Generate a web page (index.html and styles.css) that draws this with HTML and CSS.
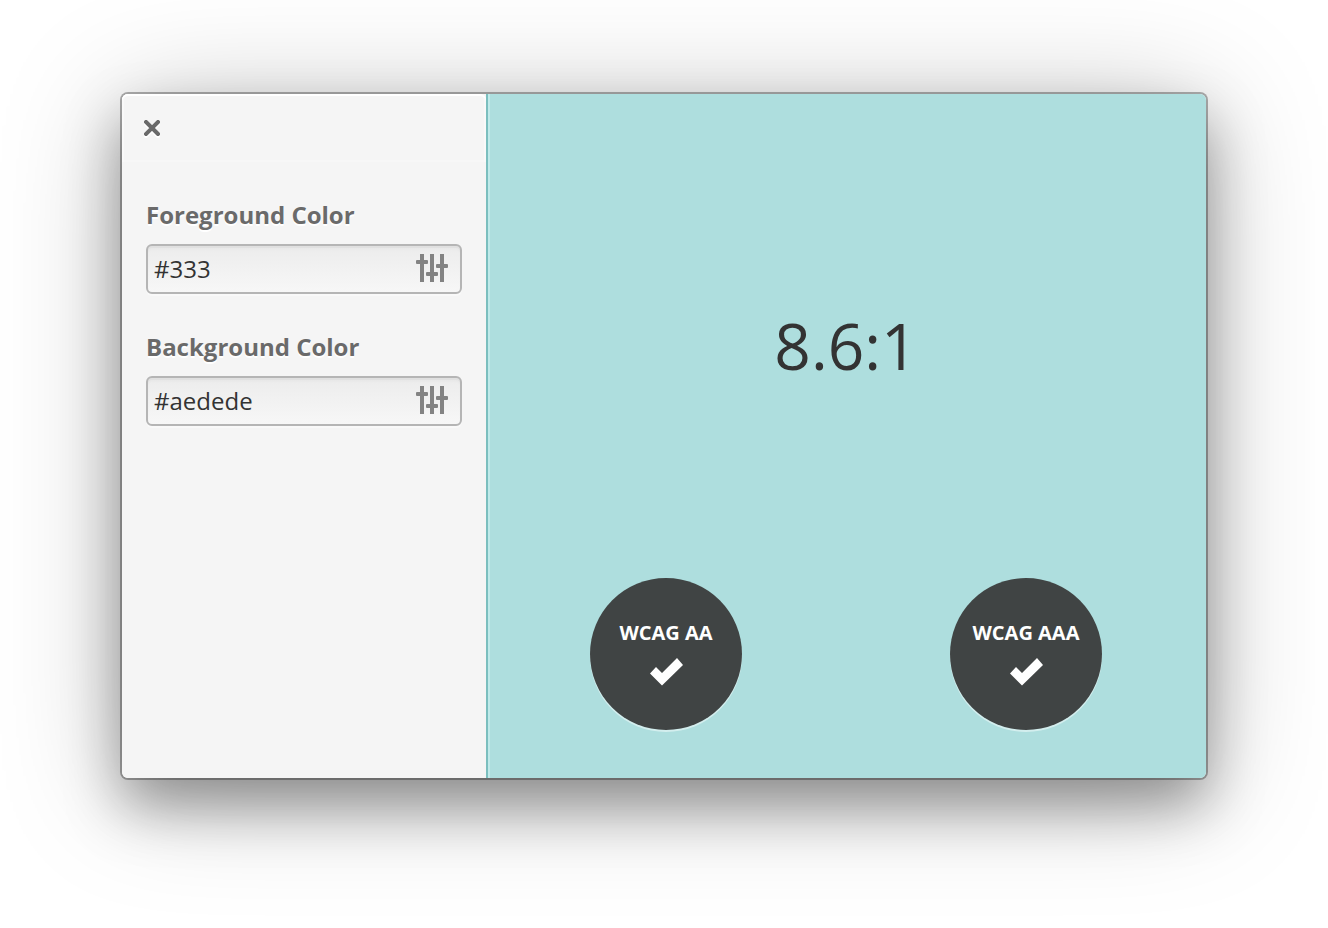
FILE: index.html
```html
<!DOCTYPE html>
<html lang="en">
<head>
<meta charset="utf-8">
<meta name="viewport" content="width=device-width, initial-scale=1">
<title>Contrast Checker</title>
<link rel="stylesheet" href="styles.css">
</head>
<body class="desktop">
<svg class="symbols" aria-hidden="true">
  <symbol id="sliders" viewBox="0 0 32 28">
    <path d="M4 0h4v28H4zM14 0h4v28h-4zM24 0h4v28h-4z"/>
    <rect x="0" y="6" width="12" height="4" rx="1"/>
    <rect x="10" y="18" width="12" height="4" rx="1"/>
    <rect x="20" y="10" width="12" height="4" rx="1"/>
  </symbol>
  <symbol id="check" viewBox="0 0 34 28">
    <path d="M1 15.500 7 9l6 6L28 0l6 7L13 27.500z"/>
  </symbol>
</svg>
<main class="window">
  <section class="sidebar">
    <header class="titlebar">
      <button class="close" type="button" aria-label="Close">
        <svg class="close-icon" viewBox="0 0 16 16"><path d="M2 2l12 12M14 2L2 14"/></svg>
      </button>
    </header>
    <form class="fields">
      <div class="field">
        <label class="label" for="foreground">Foreground Color</label>
        <div class="entry">
          <input class="input" id="foreground" type="text" value="#333" spellcheck="false">
          <button class="picker" type="button" aria-label="Choose foreground color"><svg class="picker-icon"><use href="#sliders"/></svg></button>
        </div>
      </div>
      <div class="field">
        <label class="label" for="background">Background Color</label>
        <div class="entry">
          <input class="input" id="background" type="text" value="#aedede" spellcheck="false">
          <button class="picker" type="button" aria-label="Choose background color"><svg class="picker-icon"><use href="#sliders"/></svg></button>
        </div>
      </div>
    </form>
  </section>
  <section class="preview">
    <div class="ratio">8.6:1</div>
    <div class="grades">
      <div class="grade"><span>WCAG AA</span><svg class="check-icon"><use href="#check"/></svg></div>
      <div class="grade"><span>WCAG AAA</span><svg class="check-icon"><use href="#check"/></svg></div>
    </div>
  </section>
</main>
</body>
</html>
```
FILE: styles.css
```css
* { box-sizing: border-box; }

.desktop {
  display: flex;
  min-height: 100vh;
  margin: 0;
  padding: 94px 122px 150px;
  background: #fff;
  color: #333;
  font-family: "Open Sans", "Noto Sans", sans-serif;
  font-size: 24px;
}

.symbols { display: none; }

.window {
  display: flex;
  flex: 1;
  border-radius: 6px;
  box-shadow:
    0 0 0 2px rgba(0, 0, 0, 0.3),
    0 28px 56px rgba(0, 0, 0, 0.35),
    0 12px 120px rgba(0, 0, 0, 0.25);
}

.sidebar {
  flex: 0 0 364px;
  min-width: 0;
  background: #f5f5f5;
  border-radius: 6px 0 0 6px;
}

.titlebar {
  display: flex;
  align-items: center;
  height: 68px;
  padding: 0 14px;
  border-radius: 6px 6px 0 0;
  box-shadow: inset 0 2px #fff, inset 2px 0 #f9f9f9, inset -2px 0 #f9f9f9, inset 0 -2px #f7f7f7;
}

.close {
  display: flex;
  padding: 8px;
  border: 0;
  background: none;
}

.close-icon {
  width: 16px;
  height: 16px;
  fill: none;
  stroke: #6a6a6a;
  stroke-width: 4;
  stroke-linecap: square;
  filter: drop-shadow(0 2px 0 #fff);
}

.fields {
  display: grid;
  grid-template-columns: minmax(0, 1fr);
  gap: 36px;
  padding: 36px 24px 24px;
}

.field {
  display: grid;
  grid-template-columns: minmax(0, 1fr);
  gap: 12px;
}

.label {
  color: #6a6a6a;
  font-weight: 700;
  line-height: 34px;
  text-shadow: 0 2px #fff;
}

.entry {
  display: flex;
  align-items: center;
  height: 50px;
  padding: 0 12px 2px 6px;
  border: 2px solid #b5b5b5;
  border-radius: 6px;
  background: linear-gradient(#ececec, #f7f7f7);
  box-shadow: inset 0 2px #e0e0e0, inset 0 4px 2px rgba(0, 0, 0, 0.02), 0 2px #f9f9f9;
}

.input {
  flex: 1;
  width: 100%;
  min-width: 0;
  padding: 0;
  border: 0;
  outline: 0;
  background: none;
  color: #333;
  font: inherit;
}

.picker {
  display: flex;
  padding: 0;
  border: 0;
  background: none;
}

.picker-icon {
  width: 32px;
  height: 28px;
  fill: #838383;
}

.preview {
  display: flex;
  flex: 1;
  flex-direction: column;
  padding: 18px 0 48px;
  border-radius: 0 6px 6px 0;
  background: #aedede;
  box-shadow: inset 2px 0 #7bbfbf, inset 4px 0 #c0eaea;
}

.ratio {
  display: flex;
  flex: 1;
  align-items: center;
  justify-content: center;
  font-size: 64px;
}

.grades {
  display: grid;
  grid-template-columns: 1fr 1fr;
  justify-items: center;
}

.grade {
  display: flex;
  flex-direction: column;
  align-items: center;
  justify-content: center;
  gap: 12px;
  width: 152px;
  height: 152px;
  padding-bottom: 2px;
  border-radius: 50%;
  background: #404444;
  box-shadow: 0 2px #d3eeee;
  color: #fff;
  font-size: 20px;
  font-weight: 700;
  line-height: 26px;
}

.check-icon {
  width: 34px;
  height: 28px;
  fill: #fff;
}
```
